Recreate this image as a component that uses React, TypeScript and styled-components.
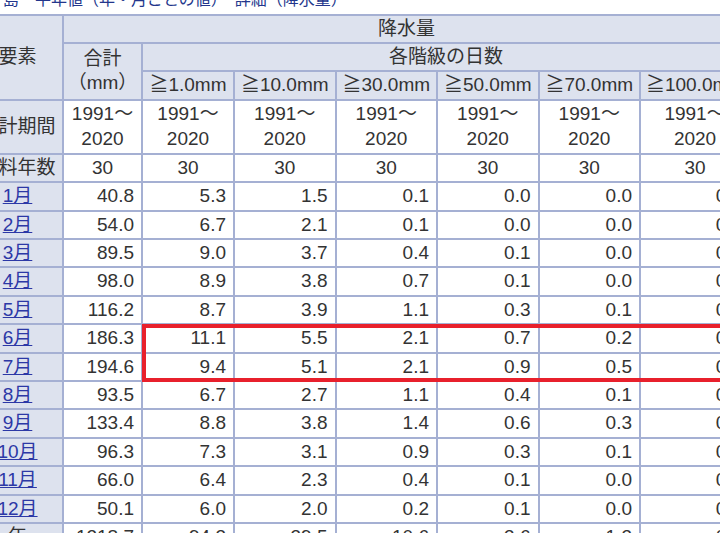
import { createGlobalStyle } from "styled-components";
import styled from "styled-components";

const GlobalStyle = createGlobalStyle`
  html, body {
    margin: 0;
    padding: 0;
    overflow: hidden;
    background: #fff;
  }
  body {
    font-family: "Liberation Sans", "Noto Sans CJK JP", sans-serif;
  }
`;

const BORDER = "#a5b0d3";

// 各階級の日数
const classes = ["≧1.0mm", "≧10.0mm", "≧30.0mm", "≧50.0mm", "≧70.0mm", "≧100.0mm"];

const colWidths = [91, 79, 92, 101.5, 101.5, 101.5, 101.5, 110];

const months: string[][] = [
  ["1月", "40.8", "5.3", "1.5", "0.1", "0.0", "0.0", "0.0"],
  ["2月", "54.0", "6.7", "2.1", "0.1", "0.0", "0.0", "0.0"],
  ["3月", "89.5", "9.0", "3.7", "0.4", "0.1", "0.0", "0.0"],
  ["4月", "98.0", "8.9", "3.8", "0.7", "0.1", "0.0", "0.0"],
  ["5月", "116.2", "8.7", "3.9", "1.1", "0.3", "0.1", "0.0"],
  ["6月", "186.3", "11.1", "5.5", "2.1", "0.7", "0.2", "0.1"],
  ["7月", "194.6", "9.4", "5.1", "2.1", "0.9", "0.5", "0.1"],
  ["8月", "93.5", "6.7", "2.7", "1.1", "0.4", "0.1", "0.0"],
  ["9月", "133.4", "8.8", "3.8", "1.4", "0.6", "0.3", "0.1"],
  ["10月", "96.3", "7.3", "3.1", "0.9", "0.3", "0.1", "0.0"],
  ["11月", "66.0", "6.4", "2.3", "0.4", "0.1", "0.0", "0.0"],
  ["12月", "50.1", "6.0", "2.0", "0.2", "0.1", "0.0", "0.0"],
];

const yearRow = ["1218.7", "94.3", "39.5", "10.6", "3.6", "1.3", "0.3"];

function App(): JSX.Element {
  const dataCols = colWidths.length - 1;

  return (
    <>
      <GlobalStyle />
      <Page>
        <Title>島　平年値（年・月ごとの値）　詳細（降水量）</Title>
        <TableWrap>
          <Table>
            <colgroup>
              {colWidths.map((w, i) => (
                <col key={i} style={{ width: w }} />
              ))}
            </colgroup>
            <thead>
              <tr>
                <Head rowSpan={3}>要素</Head>
                <Head colSpan={dataCols}>降水量</Head>
              </tr>
              <tr>
                <Head rowSpan={2}>
                  合計
                  <br />
                  （mm）
                </Head>
                <Head colSpan={classes.length}>各階級の日数</Head>
              </tr>
              <tr>
                {classes.map((c) => (
                  <Head key={c}>{c}</Head>
                ))}
              </tr>
            </thead>
            <tbody>
              <tr>
                <Head>統計期間</Head>
                {Array.from({ length: dataCols }).map((_, i) => (
                  <Cell key={i} $center $tall>
                    1991～
                    <br />
                    2020
                  </Cell>
                ))}
              </tr>
              <tr>
                <Head>資料年数</Head>
                {Array.from({ length: dataCols }).map((_, i) => (
                  <Cell key={i} $center>
                    30
                  </Cell>
                ))}
              </tr>
              {months.map(([label, ...values]) => (
                <tr key={label}>
                  <Head>
                    <MonthLink href="#">{label}</MonthLink>
                  </Head>
                  {values.map((v, i) => (
                    <Cell key={i}>{v}</Cell>
                  ))}
                </tr>
              ))}
              <tr>
                <Head>年</Head>
                {yearRow.map((v, i) => (
                  <Cell key={i}>{v}</Cell>
                ))}
              </tr>
            </tbody>
          </Table>
          {/* 6月・7月の強調枠 */}
          <Highlight />
        </TableWrap>
      </Page>
    </>
  );
}
export default App;

const Page = styled.div`
  margin-left: -29px;
`;

const Title = styled.h1`
  margin: -10px 0 3.5px;
  padding-left: 32px;
  font-size: 16px;
  line-height: 20px;
  font-weight: normal;
  color: #23368c;
  white-space: nowrap;
`;

const TableWrap = styled.div`
  position: relative;
  width: max-content;
`;

const Table = styled.table`
  border-collapse: collapse;
  table-layout: fixed;
  width: 778px;
  font-size: 19px;
  line-height: 24.4px;
  color: #333;
`;

const Head = styled.th`
  background: #dde2ee;
  border: 2px solid ${BORDER};
  padding: 1px 0;
  font-weight: normal;
  text-align: center;
  white-space: nowrap;
`;

const Cell = styled.td<{ $center?: boolean; $tall?: boolean }>`
  background: #fff;
  border: 2px solid ${BORDER};
  padding: ${(p) => (p.$tall ? "1.6px 0" : p.$center ? "1px 0" : "1px 7px 1px 0")};
  text-align: ${(p) => (p.$center ? "center" : "right")};
  white-space: nowrap;
`;

const MonthLink = styled.a`
  color: #2c38a6;
  text-decoration: underline;
`;

const Highlight = styled.div`
  position: absolute;
  left: 171px;
  top: 310.5px;
  width: 610px;
  height: 58px;
  box-sizing: border-box;
  border: 4px solid #e8202c;
  pointer-events: none;
`;
